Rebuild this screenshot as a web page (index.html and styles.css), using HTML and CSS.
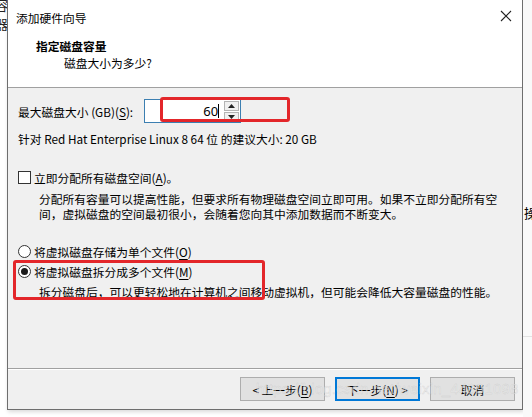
FILE: index.html
```html
<!DOCTYPE html>
<html lang="zh-CN">
  <head>
    <meta charset="UTF-8" />
    <title>添加硬件向导</title>
    <link rel="stylesheet" href="styles.css">
  </head>
  <body>
    <div class="desk">
      <aside class="side side-left">
        <span>容</span>
        <span>器</span>
      </aside>
      <main class="dialog">
        <header class="titlebar">
          <span class="title">添加硬件向导</span>
          <span class="close">
            <svg width="12" height="12" viewBox="0 0 12 12"><path d="M1 1 L11 11 M11 1 L1 11" stroke="#222" stroke-width="1.1" fill="none"/></svg>
          </span>
        </header>
        <section class="head">
          <h1>指定磁盘容量</h1>
          <p>磁盘大小为多少?</p>
        </section>
        <section class="body">
          <div class="size-row">
            <label>最大磁盘大小 (GB)(<u>S</u>):</label>
            <div class="spin">
              <span class="spin-value">60</span>
              <span class="caret"></span>
              <span class="spin-btns">
                <span class="spin-btn"><svg width="7" height="4" viewBox="0 0 7 4"><path d="M0 4 L3.5 0 L7 4 Z" fill="#222"/></svg></span>
                <span class="spin-btn"><svg width="7" height="4" viewBox="0 0 7 4"><path d="M0 0 L3.5 4 L7 0 Z" fill="#222"/></svg></span>
              </span>
            </div>
            <span class="mark mark-size"></span>
          </div>
          <p class="hint">针对 Red Hat Enterprise Linux 8 64 位 的建议大小: 20 GB</p>

          <div class="option option-check">
            <span class="box"></span>
            <span>立即分配所有磁盘空间(<u>A</u>)。</span>
          </div>
          <p class="desc">分配所有容量可以提高性能，但要求所有物理磁盘空间立即可用。如果不立即分配所有空<br>间，虚拟磁盘的空间最初很小，会随着您向其中添加数据而不断变大。</p>

          <div class="radios">
            <div class="option">
              <span class="radio"></span>
              <span>将虚拟磁盘存储为单个文件(<u>O</u>)</span>
            </div>
            <div class="split">
              <div class="option">
                <span class="radio checked"></span>
                <span>将虚拟磁盘拆分成多个文件(<u>M</u>)</span>
              </div>
              <p class="desc">拆分磁盘后，可以更轻松地在计算机之间移动虚拟机，但可能会降低大容量磁盘的性能。</p>
              <span class="mark mark-split"></span>
            </div>
          </div>
        </section>
        <footer class="footer">
          <button class="btn">&lt; 上一步(<u>B</u>)</button>
          <button class="btn btn-default">下一步(<u>N</u>) &gt;</button>
          <button class="btn">取消</button>
          <span class="watermark">https://blog.csdn.net/weixin_44891098</span>
        </footer>
      </main>
      <aside class="side side-right">
        <span class="cut">操</span>
      </aside>
    </div>
  </body>
</html>
```

FILE: styles.css
```css
* {
  box-sizing: border-box;
  margin: 0;
  padding: 0;
}
body {
  background: #ffffff;
  color: #000000;
  font-family: "Noto Sans CJK SC", "Microsoft YaHei", sans-serif;
  font-size: 11.75px;
  line-height: 15px;
  width: 532px;
  height: 417px;
  overflow: hidden;
}
u {
  text-decoration: underline;
  text-underline-offset: 2px;
}
.desk {
  display: flex;
  height: 417px;
}
/* bits of the window behind */
.side {
  background: #f4f4f4;
  overflow: hidden;
}
.side-left {
  width: 7px;
  display: flex;
  flex-direction: column;
  align-items: flex-end;
  font-size: 13px;
  line-height: 17px;
  color: #222;
  background: #ffffff;
}
.side-left span {
  margin-right: -1px;
  margin-top: -4px;
}
.side-left span + span {
  margin-top: 2px;
}
.side-right {
  flex: 1;
  background: #f9f9f9;
  position: relative;
}
.side-right .cut {
  position: absolute;
  top: 205px;
  left: 1px;
  font-size: 13px;
}
.side-right::after {
  content: "";
  position: absolute;
  left: 0;
  right: 0;
  top: 336px;
  border-top: 1px solid #e2e2e2;
}
/* dialog */
.dialog {
  width: 516px;
  height: 410px;
  border: 1px solid #6e6e6e;
  border-top: none;
  background: #f0f0f0;
  display: flex;
  flex-direction: column;
  box-shadow: 1px 2px 4px rgba(0, 0, 0, 0.15);
}
.titlebar {
  background: #ffffff;
  height: 30px;
  display: flex;
  align-items: center;
  justify-content: space-between;
  padding: 4px 10px 0 8px;
}
.close {
  display: flex;
  margin-top: -3px;
}
.head {
  background: #ffffff;
  height: 58px;
  border-bottom: 1px solid #a0a0a0;
  padding: 8px 0 0 28px;
}
.head h1 {
  font-size: 11.75px;
  font-weight: bold;
  line-height: 16px;
}
.head p {
  padding-left: 28px;
  margin-top: 1px;
  line-height: 16px;
}
.body {
  flex: 1;
  padding: 11px 0 0 10px;
  border-bottom: 1px solid #a0a0a0;
  box-shadow: 0 1px 0 #ffffff;
}
.size-row {
  display: flex;
  align-items: center;
  position: relative;
  height: 24px;
}
.spin {
  margin-left: 11px;
  width: 97px;
  height: 24px;
  background: #ffffff;
  border: 1px solid #3c7fb1;
  display: flex;
  align-items: center;
  justify-content: flex-end;
  padding-right: 1px;
}
.spin-value {
  font-family: "Noto Sans", "Noto Sans CJK SC", sans-serif;
  font-size: 13px;
}
.caret {
  width: 1px;
  height: 14px;
  background: #000;
  margin: 0 5px 0 0;
}
.spin-btns {
  display: flex;
  flex-direction: column;
  gap: 1px;
}
.spin-btn {
  width: 15px;
  height: 10px;
  border: 1px solid #b4b4b4;
  background: #f0f0f0;
  display: flex;
  align-items: center;
  justify-content: center;
}
.mark {
  position: absolute;
  border: 3px solid #e3262a;
  border-radius: 3px;
}
.mark-size {
  left: 142px;
  top: -2px;
  width: 130px;
  height: 25px;
}
.hint {
  margin-top: 8px;
}
.option {
  display: flex;
  align-items: center;
  gap: 3px;
  height: 17px;
}
.option-check {
  margin-top: 23px;
}
.box {
  width: 13px;
  height: 13px;
  border: 1px solid #333;
  background: #fff;
}
.radio {
  width: 13px;
  height: 13px;
  border: 1px solid #333;
  border-radius: 50%;
  background: #fff;
  display: flex;
  align-items: center;
  justify-content: center;
}
.radio.checked::after {
  content: "";
  width: 7px;
  height: 7px;
  border-radius: 50%;
  background: #1a1a1a;
}
.desc {
  padding-left: 21px;
  margin-top: 5px;
  white-space: nowrap;
}
.radios {
  margin-top: 22px;
  display: flex;
  flex-direction: column;
  gap: 3px;
}
.split {
  position: relative;
}
.split .desc {
  margin-top: 4px;
}
.mark-split {
  left: -5px;
  top: -3px;
  width: 252px;
  height: 40px;
}
.footer {
  height: 40px;
  display: flex;
  justify-content: flex-end;
  align-items: flex-start;
  gap: 10px;
  padding: 8px 7px 0 0;
  position: relative;
}
.btn {
  width: 85px;
  height: 24px;
  background: #e1e1e1;
  border: 1px solid #adadad;
  font-family: "Noto Sans CJK SC", sans-serif;
  font-size: 11.75px;
  color: #000;
}
.btn-default {
  border: 2px solid #0078d7;
}
.watermark {
  position: absolute;
  left: 248px;
  top: 12px;
  font-family: "Liberation Sans", sans-serif;
  font-size: 15px;
  letter-spacing: 0.2px;
  color: rgba(235, 235, 235, 0.6);
  -webkit-text-stroke: 0.4px rgba(160, 160, 160, 0.3);
}
```
